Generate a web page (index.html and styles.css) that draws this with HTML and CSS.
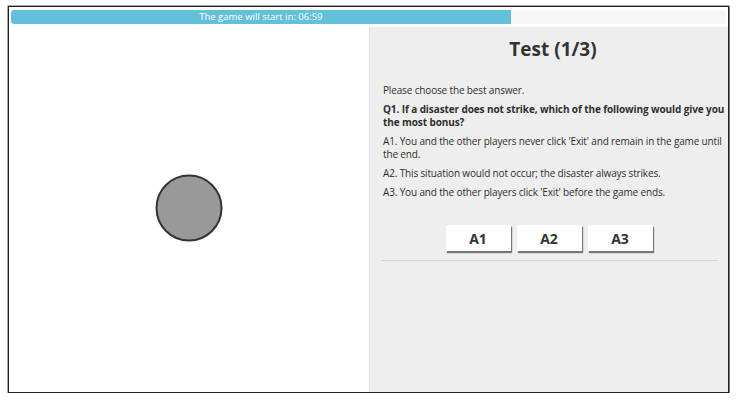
FILE: index.html
```html
<!DOCTYPE html>
<html>
<head>
<meta charset="utf-8">
<link rel="stylesheet" href="styles.css">
</head>
<body>
<div class="frame">
  <div class="progress">
    <div class="fill" style="width: 69.9%">The game will start in: 06:59</div>
  </div>
  <div class="panels">
    <div class="left">
      <svg class="dot" width="70" height="70" viewBox="0 0 70 70"><circle cx="35" cy="35" r="32.5" fill="#999" stroke="#333" stroke-width="2"/></svg>
    </div>
    <div class="right">
      <h1 class="title">Test (1/3)</h1>
      <p class="txt">Please choose the best answer.</p>
      <p class="txt q">Q1. If a disaster does not strike, which of the following would give you the most bonus?</p>
      <p class="txt">A1. You and the other players never click 'Exit' and remain in the game until the end.</p>
      <p class="txt">A2. This situation would not occur; the disaster always strikes.</p>
      <p class="txt">A3. You and the other players click 'Exit' before the game ends.</p>
      <div class="buttons">
        <button class="btn">A1</button>
        <button class="btn">A2</button>
        <button class="btn">A3</button>
      </div>
      <hr class="rule">
    </div>
  </div>
</div>
</body>
</html>
```
FILE: styles.css
```css
html, body { margin: 0; padding: 0; background: #fff; }
body { padding: 6px 0 0 8px; font-family: "Open Sans", sans-serif; color: #333; }
.frame {
  width: 719px;
  height: 385px;
  border: 1px solid #222;
  box-shadow: 1px 1px 0 #777, 0 0 0 0.5px #555;
  display: flex;
  flex-direction: column;
  background: #fff;
}
.progress {
  margin: 3px 2px 2px 2px;
  height: 14px;
  background: #f5f5f5;
  border-radius: 3px;
  overflow: hidden;
  flex: none;
}
.fill {
  height: 100%;
  background: #62c0da;
  color: #fff;
  font-size: 9.5px;
  line-height: 14px;
  text-align: center;
  border-radius: 3px 0 0 3px;
  white-space: nowrap;
}
.panels { flex: 1; display: flex; margin-top: 1px; }
.left {
  width: 360px;
  display: flex;
  align-items: center;
  justify-content: center;
  padding-bottom: 3px;
  border-right: 1px solid #e0e0e0;
}
.dot { display: block; }
.right {
  flex: 1;
  background: #eeeeee;
  padding: 0 1px 0 13px;
}
.title {
  margin: 10px 4px 23px 0;
  text-align: center;
  font-size: 19px;
  font-weight: 700;
  color: #333;
  line-height: 24px;
}
.txt {
  margin: 0 0 6px 0;
  font-size: 10px;
  line-height: 13px;
  letter-spacing: -0.15px;
  color: #2e2e2e;
}
.q { font-weight: 700; letter-spacing: -0.1px; }
.buttons {
  display: flex;
  justify-content: center;
  gap: 6px;
  margin: 26px 9px 0 -3px;
}
.btn {
  width: 65px;
  height: 26px;
  background: #fff;
  border: none;
  box-shadow: 1px 2px 1px #777;
  font-family: "Open Sans", sans-serif;
  font-weight: 700;
  font-size: 14px;
  color: #333;
  padding: 0;
}
.rule {
  margin: 9px 9px 0 -2px;
  border: none;
  border-top: 1px solid #d4d4d4;
}
```
